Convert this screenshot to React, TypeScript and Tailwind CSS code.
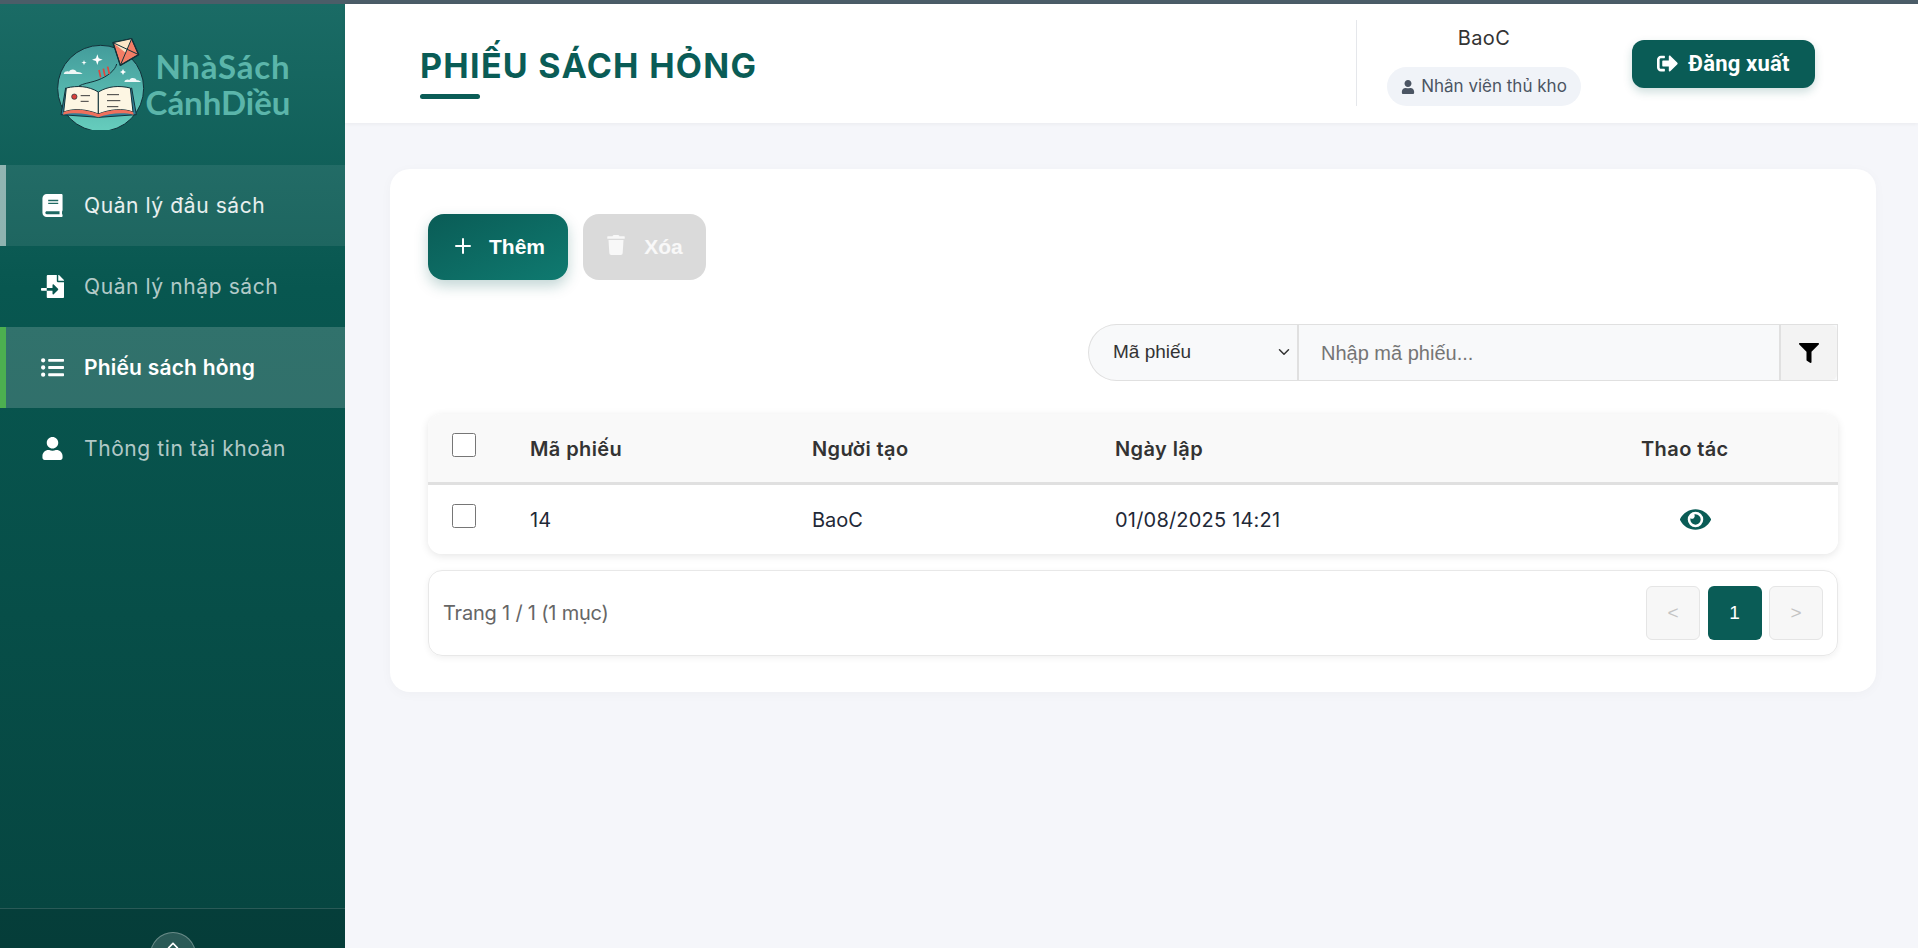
import { FaBook, FaEye, FaFileImport, FaFilter, FaListUl, FaSignOutAlt, FaTrash, FaUser } from "react-icons/fa"
import { FaAngleUp } from "react-icons/fa6"
import { ChevronDown, Plus } from "lucide-react"

function Logo() {
    return (
        <svg viewBox="0 0 300 300" className="w-[100px] h-[100px] shrink-0">
            <defs>
                <linearGradient id="sky" x1="0" y1="0" x2="0" y2="1">
                    <stop offset="0" stopColor="#439c9b" />
                    <stop offset="1" stopColor="#66cdbd" />
                </linearGradient>
            </defs>
            <circle cx="155" cy="175" r="129" fill="url(#sky)" stroke="#12323a" strokeWidth="3" />
            <path d="M145 73l4 12 12 4-12 4-4 12-4-12-12-4 12-4z" fill="#fff" />
            <path d="M105 90l2 6 6 2-6 2-2 6-2-6-6-2 6-2z" fill="#fff" />
            <path d="M222 117l3 6 6 3-6 3-3 6-3-6-6-3 6-3z" fill="#fff" />
            <path d="M44 132c2-9 12-9 16-7 4-9 20-9 23 1 8-1 14 2 18 6z" fill="#fff" opacity="0.9" />
            <path d="M226 156c2-8 11-9 15-6 5-9 19-7 22 1 6 0 10 2 13 5z" fill="#fff" opacity="0.9" />
            <path d="M77 190c0-30 40-28 70-40 30-11 52-30 56-48" fill="none" stroke="#12323a" strokeWidth="3" />
            <path d="M150 120l5 22M163 116l5 22M176 110l5 22" stroke="#e2443c" strokeWidth="5" />
            <path d="M192 38l56-12 21 48-55 32z" fill="#f47e66" stroke="#12323a" strokeWidth="4" strokeLinejoin="round" />
            <path d="M192 38l38 30 18-42z" fill="#fbe6c8" />
            <path d="M192 38l56-12 21 48-55 32zM192 38l77 36M248 26l-34 80" fill="none" stroke="#12323a" strokeWidth="3" strokeLinejoin="round" />
            <path d="M36 254l14-80 100 76 98-76 14 80-112 8z" fill="#2f7f97" stroke="#12323a" strokeWidth="3" strokeLinejoin="round" />
            <path d="M44 246c30-12 70-8 104 6v-66c-30-18-62-20-96-12z" fill="#fdf6e3" stroke="#12323a" strokeWidth="3" />
            <path d="M252 246c-30-12-70-8-104 6v-66c30-18 62-20 96-12z" fill="#fdf6e3" stroke="#12323a" strokeWidth="3" />
            <path d="M44 246c30-12 70-8 104 6 34-14 74-18 104-6l2 8c-34-8-72-4-106 8-34-12-72-16-106-8z" fill="#f0705c" />
            <path d="M95 197h28M95 214h24M174 194h36M174 212h40M174 230h34" stroke="#3b3b3b" strokeWidth="3" />
            <circle cx="76" cy="200" r="8" fill="#d9403a" stroke="#12323a" strokeWidth="2" />
        </svg>
    )
}

const menu = [
    { label: "Quản lý đầu sách", icon: <FaBook />, row: "bg-white/[0.08] border-l-[6px] border-white/50 text-white/90 tracking-[0.6px]" },
    { label: "Quản lý nhập sách", icon: <FaFileImport />, row: "border-l-[6px] border-transparent text-white/70 tracking-[0.6px]" },
    { label: "Phiếu sách hỏng", icon: <FaListUl />, row: "bg-white/[0.17] border-l-[6px] border-[#4caf50] text-white font-semibold tracking-[0.2px]" },
    { label: "Thông tin tài khoản", icon: <FaUser />, row: "border-l-[6px] border-transparent text-white/70 tracking-[0.6px]" },
]

export default function App() {
    return (
        <div className="h-screen overflow-hidden flex flex-col bg-[#f5f6fa] font-['Inter',sans-serif] text-[#333]">
            <div className="h-[4px] bg-[#4b5d68] shrink-0"></div>
            <div className="flex flex-1 min-h-0">
                <aside className="w-[345px] shrink-0 flex flex-col bg-gradient-to-b from-[#1a6b65] from-0% via-[#085750] via-30% to-[#064540] to-100% text-white">
                    <div className="h-[161px] flex items-start justify-center pt-[26px] pr-[6px]">
                        <Logo />
                        <div className="mt-[18px] -ml-[3px] font-['Lato',sans-serif] font-bold text-[#5bb5aa] text-[33px] leading-[36px] text-right">
                            <div className="tracking-[0.8px]">NhàSách</div>
                            <div>CánhDiều</div>
                        </div>
                    </div>
                    <nav className="flex-1">
                        {menu.map((m) => (
                            <div key={m.label} className={`h-[81px] flex items-center pl-[34px] gap-[20px] text-[21px] ${m.row}`}>
                                <span className="w-[24px] flex justify-center text-[23px] text-white">{m.icon}</span>
                                <span>{m.label}</span>
                            </div>
                        ))}
                    </nav>
                    <div className="h-[40px] shrink-0 border-t border-white/15 bg-black/10 flex justify-center pt-[23px]">
                        <div className="w-[46px] h-[46px] shrink-0 rounded-full bg-white/15 border border-white/30 flex justify-center pt-[6px] text-[14px]">
                            <FaAngleUp />
                        </div>
                    </div>
                </aside>
                <div className="flex-1 min-w-0 flex flex-col">
                    <header className="h-[119px] shrink-0 bg-white shadow-[0_1px_4px_rgba(0,0,0,0.05)] flex items-center pl-[75px] pr-[103px]">
                        <div className="flex-1 mt-[18px]">
                            <h1 className="font-bold text-[34px] leading-[40px] tracking-[1.3px] text-[#0a5c56]">PHIẾU SÁCH HỎNG</h1>
                            <div className="w-[60px] h-[5px] mt-[8px] rounded-full bg-[#0a5c56]"></div>
                        </div>
                        <div className="h-[86px] border-l border-[#e5e7eb] pl-[30px] flex flex-col items-center justify-between -mt-[1px]">
                            <div className="mt-[4px] text-[20px] leading-[28px] tracking-[0.4px]">BaoC</div>
                            <div className="h-[39px] w-[194px] rounded-full bg-[#f0f3f8] flex items-center justify-center gap-[6px] text-[17px] text-[#4b5563]">
                                <FaUser className="text-[14px]" />
                                Nhân viên thủ kho
                            </div>
                        </div>
                        <button className="ml-[51px] w-[183px] h-[48px] rounded-[12px] bg-[#0a5c56] text-white font-['Roboto',sans-serif] font-bold text-[22px] tracking-[0.2px] flex items-center justify-center gap-[10px] shadow-[0_4px_10px_rgba(10,92,86,0.2)]">
                            <FaSignOutAlt className="text-[21px]" />
                            Đăng xuất
                        </button>
                    </header>
                    <main className="px-[45px] pt-[46px] pr-[42px]">
                        <section className="bg-white rounded-[20px] shadow-[0_2px_12px_rgba(0,0,0,0.03)] px-[38px] pt-[45px] pb-[36px]">
                            <div className="flex gap-[15px]">
                                <button className="w-[140px] h-[66px] rounded-[16px] bg-gradient-to-br from-[#0a5c56] to-[#0f7a70] text-white font-['Liberation_Sans',sans-serif] font-bold text-[21px] flex items-center justify-center gap-[14px] shadow-[0_6px_14px_rgba(10,92,86,0.25)]">
                                    <Plus size={24} strokeWidth={2} className="-mt-[2px]" />
                                    Thêm
                                </button>
                                <button className="w-[123px] h-[66px] rounded-[16px] bg-[#dadada] text-white/80 font-['Liberation_Sans',sans-serif] font-bold text-[21px] flex items-center justify-center gap-[18px]">
                                    <FaTrash className="text-[20px] -mt-[4px]" />
                                    Xóa
                                </button>
                            </div>
                            <div className="flex justify-end mt-[44px]">
                                <div className="flex w-[750px] h-[57px] font-['Liberation_Sans',sans-serif] text-[20px] bg-[#f8f9fa] border border-[#e0e0e0] rounded-l-full rounded-r-[6px]">
                                    <div className="relative w-[208px] shrink-0">
                                        <select className="w-full h-full pl-[24px] pr-[30px] appearance-none rounded-l-full outline-none text-[19px] text-[#333]">
                                            <option>Mã phiếu</option>
                                        </select>
                                        <ChevronDown size={18} strokeWidth={2} className="absolute right-[4px] top-[18px] text-[#333] pointer-events-none" />
                                    </div>
                                    <input placeholder="Nhập mã phiếu..." className="flex-1 min-w-0 px-[22px] border-l-2 border-[#e0e0e0] outline-none placeholder:text-[#757575]" />
                                    <button className="w-[58px] border-l-2 border-[#e0e0e0] bg-[#f3f3f3] rounded-r-[6px] flex items-center justify-center text-[20px] text-black">
                                        <FaFilter />
                                    </button>
                                </div>
                            </div>
                            <div className="mt-[33px] rounded-[14px] overflow-hidden shadow-[0_2px_8px_rgba(0,0,0,0.1)]">
                                <table className="w-full table-fixed text-left text-[20px]">
                                    <colgroup>
                                        <col className="w-[78px]" />
                                        <col className="w-[282px]" />
                                        <col className="w-[303px]" />
                                        <col className="w-[526px]" />
                                        <col className="w-[221px]" />
                                    </colgroup>
                                    <thead>
                                        <tr className="h-[69px] bg-[#f9f9f9] border-b-[3px] border-[#e0e0e0] font-semibold">
                                            <th className="pl-[24px] font-semibold">
                                                <input type="checkbox" className="block w-[24px] h-[24px] -mt-[5px]" />
                                            </th>
                                            <th className="pl-[24px] pt-[2px] font-semibold tracking-[0.4px]">Mã phiếu</th>
                                            <th className="pl-[24px] pt-[2px] font-semibold tracking-[0.4px]">Người tạo</th>
                                            <th className="pl-[24px] pt-[2px] font-semibold tracking-[0.4px]">Ngày lập</th>
                                            <th className="pl-[24px] pt-[2px] font-semibold tracking-[0.4px]">Thao tác</th>
                                        </tr>
                                    </thead>
                                    <tbody>
                                        <tr className="h-[71px] bg-white text-[#1f2937]">
                                            <td className="pl-[24px]">
                                                <input type="checkbox" className="block w-[24px] h-[24px] -mt-[7px]" />
                                            </td>
                                            <td className="pl-[24px] pt-[2px]">14</td>
                                            <td className="pl-[24px] pt-[2px]">BaoC</td>
                                            <td className="pl-[24px] pt-[2px] tracking-[0.2px]">01/08/2025 14:21</td>
                                            <td className="pl-[63px]">
                                                <FaEye className="text-[31px] text-[#0a5c56]" />
                                            </td>
                                        </tr>
                                    </tbody>
                                </table>
                            </div>
                            <div className="mt-[16px] h-[86px] rounded-[14px] border border-[#e8e8e8] shadow-[0_2px_6px_rgba(0,0,0,0.06)] flex items-center justify-between pl-[14px] pr-[14px]">
                                <span className="text-[20px] tracking-[-0.2px] text-[#666]">Trang 1 / 1 (1 mục)</span>
                                <div className="flex gap-[7.5px] font-['Liberation_Sans',sans-serif] text-[19px]">
                                    <button className="w-[54px] h-[54px] rounded-[6px] border border-[#e5e5e5] bg-[#f7f7f7] text-[#c4c4c4]">&lt;</button>
                                    <button className="w-[54px] h-[54px] rounded-[6px] bg-[#0a5c56] text-white">1</button>
                                    <button className="w-[54px] h-[54px] rounded-[6px] border border-[#e5e5e5] bg-[#f7f7f7] text-[#c4c4c4]">&gt;</button>
                                </div>
                            </div>
                        </section>
                    </main>
                </div>
            </div>
        </div>
    )
}
